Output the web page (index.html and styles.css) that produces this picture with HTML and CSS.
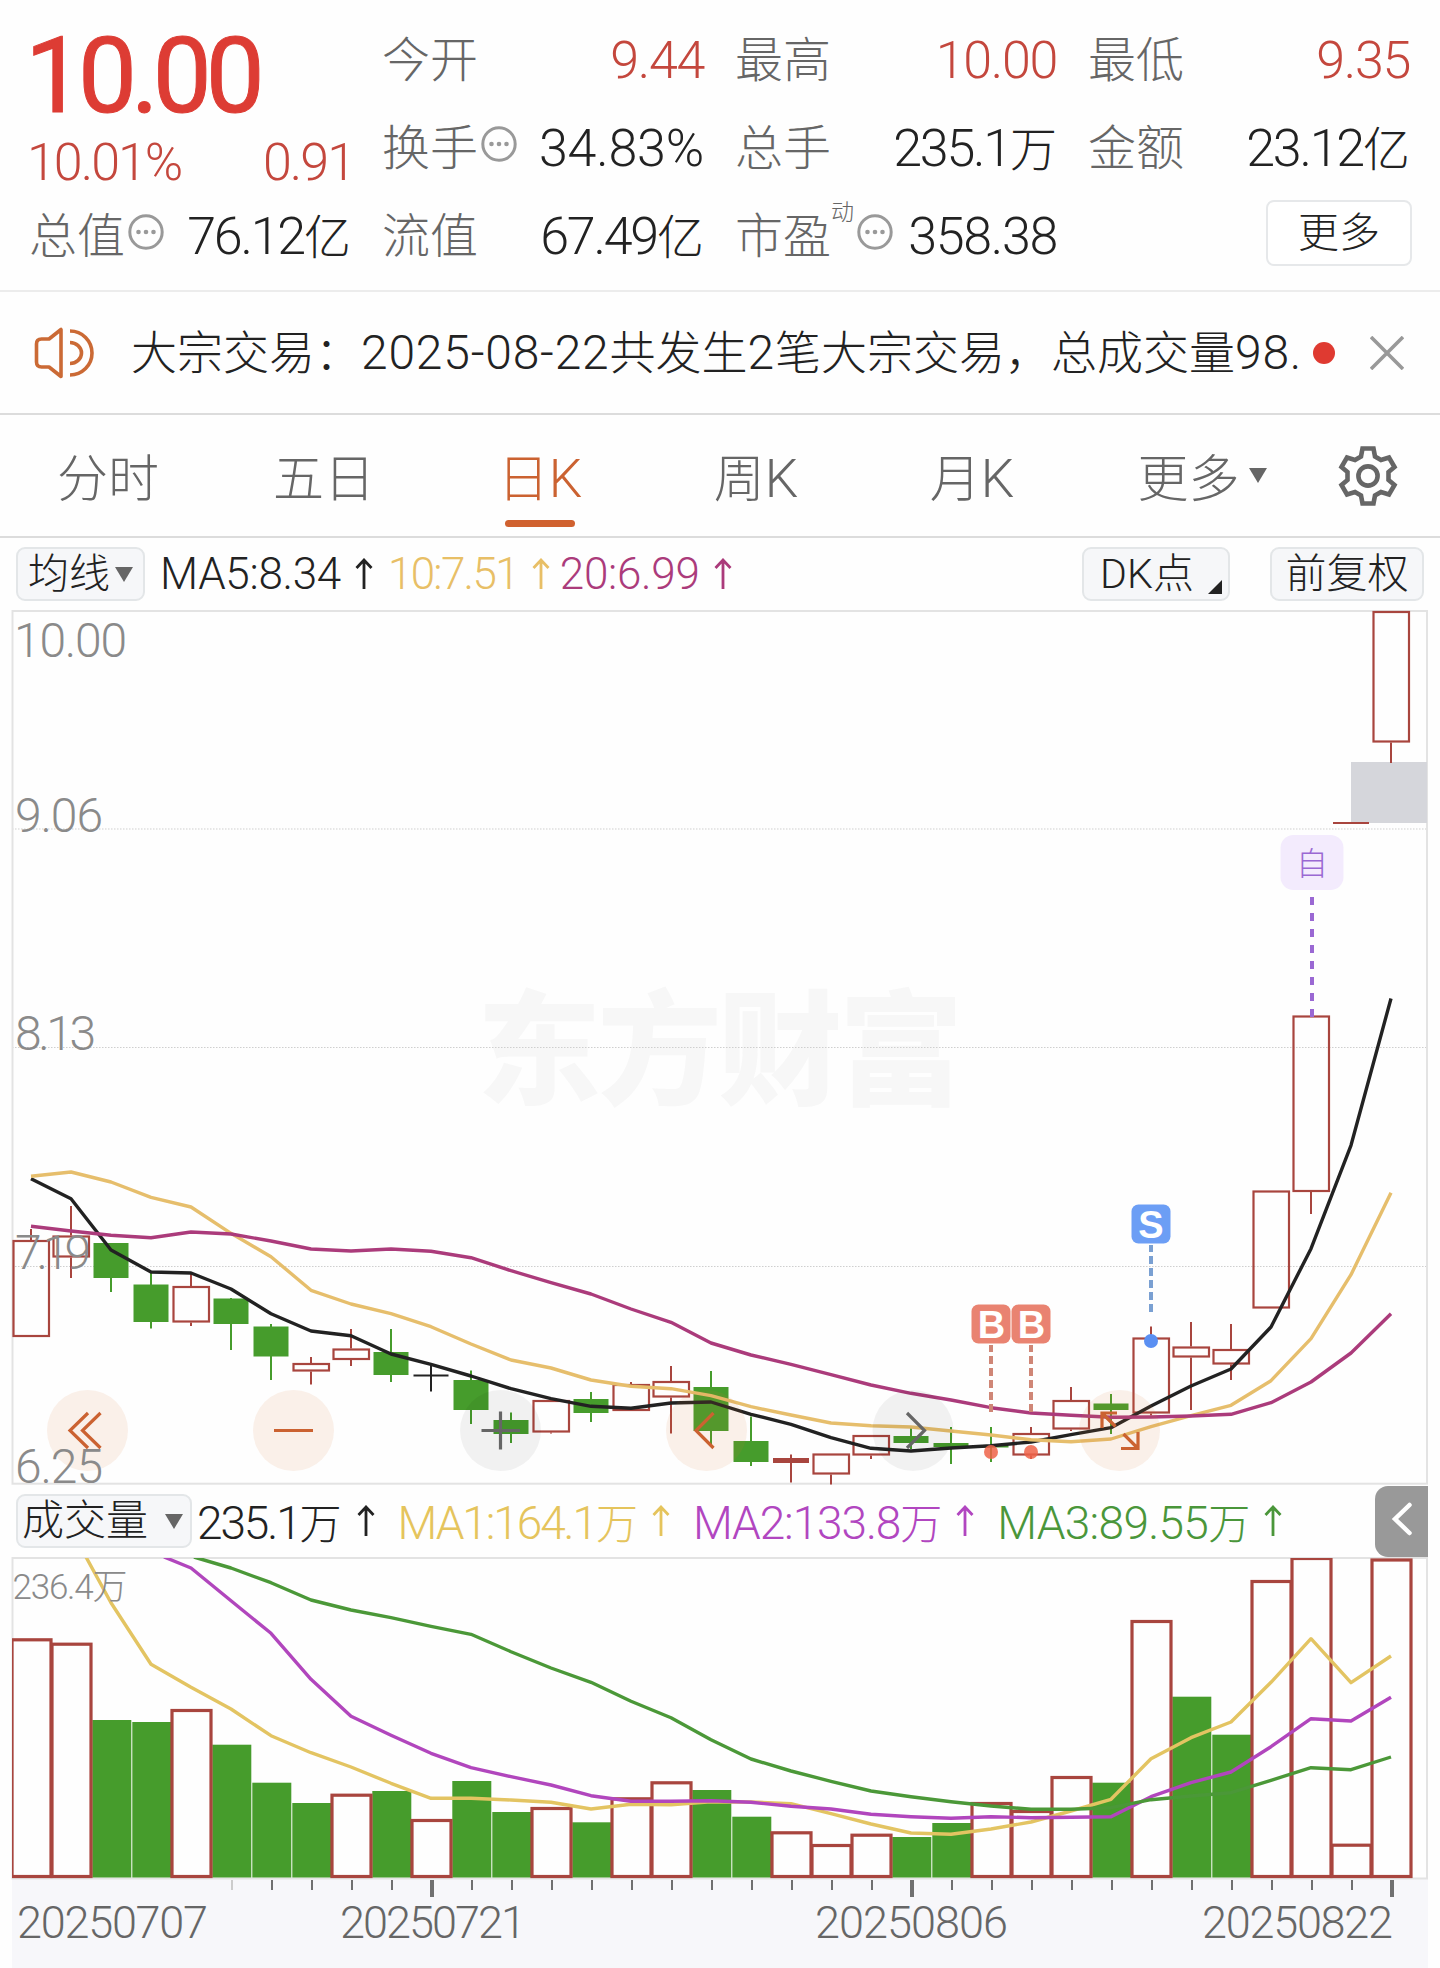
FILE: index.html
```html
<!DOCTYPE html>
<html lang="zh-CN">
<head>
    <meta charset="UTF-8">
    <meta name="viewport" content="width=device-width, initial-scale=1.0">
    <title>日K</title>
    <link rel="stylesheet" href="styles.css">
</head>
<body>

    <div class="quote">
        <div class="price-box">
            <div class="price">10.00</div>
            <div class="change"><span>10.01%</span><span>0.91</span></div>
        </div>
        <div class="cell"><span class="label">今开</span><span class="value red">9.44</span></div>
        <div class="cell"><span class="label">最高</span><span class="value red">10.00</span></div>
        <div class="cell"><span class="label">最低</span><span class="value red">9.35</span></div>

        <div class="cell">
            <span class="label">换手</span>
            <svg class="info" viewBox="0 0 36 36"><use href="#dots"/></svg>
            <span class="value pct">34.83%</span>
        </div>
        <div class="cell"><span class="label">总手</span><span class="value big">235.1<i>万</i></span></div>
        <div class="cell"><span class="label">金额</span><span class="value big">23.12<i>亿</i></span></div>

        <div class="cell">
            <span class="label">总值</span>
            <svg class="info" viewBox="0 0 36 36"><g id="dots"><circle cx="18" cy="18" r="16.2" fill="none" stroke="#999" stroke-width="3"/><circle cx="10.5" cy="18" r="2.3" fill="#999"/><circle cx="18" cy="18" r="2.3" fill="#999"/><circle cx="25.5" cy="18" r="2.3" fill="#999"/></g></svg>
            <span class="value big">76.12<i>亿</i></span>
        </div>
        <div class="cell"><span class="label">流值</span><span class="value big">67.49<i>亿</i></span></div>
        <div class="cell">
            <span class="label">市盈</span><span class="sup">动</span>
            <svg class="info" viewBox="0 0 36 36"><use href="#dots"/></svg>
            <span class="value">358.38</span>
        </div>
        <div class="cell"><button class="more-btn">更多</button></div>
    </div>

    <div class="notice">
        <svg class="speaker" viewBox="0 0 60 52" fill="none" stroke="#cb6a35" stroke-width="3.6" stroke-linejoin="round">
            <path d="M2.500 17q0-5 5-5h7.500L27 2.500v47L15 40H7.500q-5 0-5-5z"/>
            <path d="M36 15.500a11.500 10.500 0 0 1 0 21M36 4a22 22 0 0 1 0 44"/>
        </svg>
        <span class="notice-text">大宗交易：<b>2025-08-22</b>共发生<b>2</b>笔大宗交易，总成交量<b>98.</b></span>
        <span class="red-dot"></span>
        <svg class="close" viewBox="0 0 34 34" stroke="#999" stroke-width="3.6"><path d="M1 1l32 32M33 1L1 33"/></svg>
    </div>

    <div class="tabs">
        <div class="tab">分时</div>
        <div class="tab">五日</div>
        <div class="tab active">日<b>K</b></div>
        <div class="tab">周<b>K</b></div>
        <div class="tab">月<b>K</b></div>
        <div class="tab tab-more">更多<span class="caret"></span></div>
        <svg class="gear" viewBox="-30 -30 60 60" fill="none" stroke="#666" stroke-width="4.600">
            <path d="M-5.500-27.500H5.500L7-19.500L13-16L21-18.500L26.500-9L20.500-4V4L26.500 9L21 18.500L13 16L7 19.500L5.500 27.500H-5.500L-7 19.500L-13 16L-21 18.500L-26.500 9L-20.500 4V-4L-26.500-9L-21-18.500L-13-16L-7-19.500Z"/>
            <circle r="9.600"/>
        </svg>
    </div>

    <div class="ma-bar">
        <button class="chip chip-ma">均线<span class="caret"></span></button>
        <span class="ma black">MA5:8.34</span><svg class="arrow black" viewBox="0 0 18 32"><path id="up" d="M9 31V2M1.500 10L9 2L16.500 10"/></svg>
        <span class="ma yellow">10:7.51</span><svg class="arrow yellow" viewBox="0 0 18 32"><use href="#up"/></svg>
        <span class="ma magenta">20:6.99</span><svg class="arrow magenta" viewBox="0 0 18 32"><use href="#up"/></svg>
        <button class="chip chip-dk"><b>DK</b>点<span class="corner"></span></button>
        <button class="chip chip-fq">前复权</button>
    </div>

    <svg id="kline" class="chart" viewBox="0 609 1440 875" width="1440" height="875"></svg>

    <div class="vol-bar">
        <button class="chip chip-vol">成交量<span class="caret"></span></button>
        <span class="vol black">235.1<i>万</i></span><svg class="arrow black" viewBox="0 0 18 32"><use href="#up"/></svg>
        <span class="vol yellow2">MA1:164.1<i>万</i></span><svg class="arrow yellow2" viewBox="0 0 18 32"><use href="#up"/></svg>
        <span class="vol purple">MA2:133.8<i>万</i></span><svg class="arrow purple" viewBox="0 0 18 32"><use href="#up"/></svg>
        <span class="vol green">MA3:89.55<i>万</i></span><svg class="arrow green" viewBox="0 0 18 32"><use href="#up"/></svg>
        <button class="side-btn"><svg viewBox="0 0 22 34" width="22" height="34"><path d="M18.500 3L4 17L18.500 31" fill="none" stroke="#fff" stroke-width="4.500" stroke-linecap="round"/></svg></button>
    </div>

    <svg id="volume" class="chart" viewBox="0 1556 1440 412" width="1440" height="412"></svg>

    <script>
        // [color, body top, body bottom, high, low]
        const candles = [
            ['r', 1239, 1336, 1228, 1336], ['r', 1234.5, 1256.5, 1205, 1277], ['g', 1242, 1277, 1242, 1291],
            ['g', 1283.5, 1321, 1272, 1327.5], ['r', 1285, 1321.5, 1273, 1325], ['g', 1297.5, 1323, 1297, 1349],
            ['g', 1325.5, 1355.5, 1323, 1379], ['r', 1362, 1370.5, 1356, 1383.5], ['r', 1347.5, 1359, 1328, 1365],
            ['g', 1351, 1374, 1328, 1381], ['k', 1374.5, 1374.5, 1363, 1390.5], ['g', 1379, 1409, 1369.5, 1423],
            ['g', 1419, 1433, 1411.5, 1442], ['r', 1399, 1431.5, 1399, 1432.5], ['g', 1398, 1412, 1391, 1421],
            ['r', 1383, 1410, 1381, 1410], ['r', 1380, 1396.5, 1365, 1432.5], ['g', 1386, 1430, 1370, 1443],
            ['g', 1440, 1461, 1415.5, 1465], ['r', 1457, 1462, 1453.5, 1481.5], ['r', 1452.5, 1473.5, 1452.5, 1483.5],
            ['r', 1434, 1454.5, 1434, 1458], ['g', 1435, 1442, 1426.5, 1448], ['g', 1442, 1446, 1426, 1463],
            ['g', 1445, 1446.5, 1426, 1461], ['r', 1432, 1454.5, 1426, 1458], ['r', 1399, 1428.5, 1386, 1430],
            ['g', 1402.5, 1409, 1393, 1433], ['r', 1336.5, 1412.5, 1325.5, 1414.5], ['r', 1345.5, 1356.5, 1321, 1409],
            ['r', 1348, 1363.5, 1323, 1379], ['r', 1189.5, 1307.5, 1189.5, 1307.5], ['r', 1014.5, 1191, 1014.5, 1213],
            ['r', 821, 823, 821, 823], ['r', 610, 741.5, 610, 762]
        ];
        const ma5 = [1177.7, 1197.7, 1249, 1271, 1272, 1288, 1312.7, 1330, 1334.7, 1353, 1363.3, 1375, 1387.7, 1397.7, 1405.3, 1407.3, 1402, 1401, 1413.3, 1423.3, 1436.7, 1447.3, 1450, 1447, 1444.7, 1441, 1433.7, 1426.7, 1405, 1385, 1368, 1326, 1247.7, 1144.3, 997.5];
        const ma10 = [1175.3, 1171, 1181, 1196.3, 1206, 1232.3, 1255.7, 1289.3, 1303, 1312.7, 1325.7, 1343, 1359, 1367, 1379, 1385.3, 1387.7, 1394.7, 1405.7, 1414, 1422, 1424.7, 1426, 1430, 1434, 1438.7, 1440.7, 1438, 1425.7, 1414.7, 1404.3, 1379.7, 1337.7, 1273.7, 1191.7];
        const ma20 = [1225.3, 1230, 1234.3, 1236.7, 1231, 1233, 1240, 1248, 1250, 1248, 1250.3, 1256.7, 1269.7, 1281.7, 1293, 1308, 1321.3, 1342, 1354, 1363.3, 1373.7, 1384, 1392.3, 1399, 1406.7, 1412, 1414.3, 1416.3, 1416, 1415, 1413.3, 1401.7, 1381, 1352, 1312.7];

        const volTop = [1637.3, 1641.7, 1719, 1721, 1708, 1743.7, 1781.7, 1802, 1792.7, 1790, 1818, 1780, 1811, 1806, 1821.3, 1796.3, 1780.3, 1789, 1815.7, 1830.3, 1843, 1832.7, 1836, 1822, 1801, 1809, 1775, 1781.7, 1619, 1695.7, 1733.7, 1579, 1556, 1842.7, 1557.5];
        // g = green bar, r = hollow red bar
        const volColor = 'rrgg' + 'rgggrgrgg' + 'rgrrgg' + 'rrrgg' + 'rrrg' + 'rggrrrr';
        const vma1 = [1663.3, 1686.3, 1708, 1734.7, 1751.7, 1766, 1782.3, 1797.3, 1797.3, 1799, 1801.3, 1808, 1803.3, 1803.7, 1800.7, 1801, 1802.7, 1812.7, 1823, 1832, 1833.3, 1828, 1821, 1810, 1798.3, 1757.7, 1736.7, 1721, 1681.3, 1637.7, 1681.7, 1655];
        const vma2 = [1567, 1599.7, 1632.3, 1678.3, 1715.3, 1734.3, 1752.3, 1766.7, 1775.7, 1784, 1794.7, 1800.3, 1800.3, 1799.7, 1801.3, 1805.3, 1808, 1813.3, 1815.7, 1817.3, 1815.7, 1816.7, 1816.3, 1815.7, 1795.7, 1781.7, 1771, 1745.7, 1717.7, 1720, 1696.3];
        const vma3 = [1567, 1581.7, 1599, 1609, 1616.7, 1625.3, 1633.3, 1650.7, 1667, 1681.3, 1700.3, 1716.7, 1738.7, 1758, 1770, 1780.3, 1790, 1795.7, 1800.7, 1805, 1808.3, 1808.3, 1806.7, 1798.7, 1795, 1791.7, 1779.3, 1766.7, 1768.7, 1756];

        const RED = '#a8453e';
        const GREEN = '#469c2c';
        const cx = i => 31 + i * 40;

        function rect(x, y, w, h, fill, extra = '') {
            return `<rect x="${x}" y="${y}" width="${w}" height="${h}" fill="${fill}" ${extra}/>`;
        }

        function line(x1, y1, x2, y2, color, w, extra = '') {
            return `<path d="M${x1} ${y1}L${x2} ${y2}" stroke="${color}" stroke-width="${w}" ${extra}/>`;
        }

        function curve(values, start, color, lead = '') {
            const pts = values.map((v, i) => `${cx(i + start)},${v}`).join(' ');
            return `<polyline points="${lead} ${pts}" fill="none" stroke="${color}" stroke-width="3.400" stroke-linejoin="round"/>`;
        }

        function text(x, y, len, str, cls) {
            return `<text x="${x}" y="${y}" textLength="${len}" class="${cls}">${str}</text>`;
        }

        function drawKline() {
            let s = '';
            s += text(477, 1094, 486, '东方财富', 'watermark');
            [828, 1046.5, 1265.5].forEach(y => {
                s += line(12, y, 1427, y, '#cfcfcf', 1, 'stroke-dasharray="1.500 1.500"');
            });
            s += rect(12.5, 610, 1414.5, 872.7, 'none', 'stroke="#e3e3e3" stroke-width="2"');
            s += rect(1351, 761, 76, 61, '#d5d6db');

            candles.forEach(([c, top, bottom, high, low], i) => {
                const x = cx(i);
                if (c === 'k') {
                    s += line(x, high, x, low, '#222', 2) + line(x - 17.5, top, x + 17.5, top, '#222', 2);
                } else if (c === 'g') {
                    s += line(x, high, x, low, GREEN, 2) + rect(x - 17.5, top, 35, bottom - top, GREEN);
                } else {
                    if (high < top) s += line(x, high, x, top, RED, 2);
                    if (low > bottom) s += line(x, bottom, x, low, RED, 2);
                    if (bottom - top < 6) s += rect(x - 18, top, 36, bottom - top, RED);
                    else s += rect(x - 17.5, top + 1, 35.5, bottom - top - 2, 'none', `stroke="${RED}" stroke-width="2.200"`);
                }
            });

            s += curve(ma5, 0, '#222') + curve(ma10, 0, '#e6be6c') + curve(ma20, 0, '#ab3b7b');

            // floating buttons
            [[87.5, 1], [293.5, 1], [500.5, 0], [706.5, 1], [913, 0], [1119.5, 1]].forEach(([x, on]) => {
                s += `<circle cx="${x}" cy="1429.500" r="40.500" fill="${on ? '#d97535' : '#000'}" opacity="${on ? 0.1 : 0.05}"/>`;
            });
            s += '<g fill="none" stroke="#cb6231" stroke-width="3.200">'
                + '<path d="M88 1412L70 1429.500L88 1447M100.500 1412L82.500 1429.500L100.500 1447"/>'
                + '<path d="M274 1429.500H313"/>'
                + '<path d="M713.500 1412L696 1429.500L713.500 1447"/>'
                + '<path d="M1117 1412H1102V1427M1102 1412L1115.500 1425.500M1121 1447.500H1138V1431M1138 1447.500L1123.500 1433"/>'
                + '</g><g fill="none" stroke="#666" stroke-width="3.200">'
                + '<path d="M481.500 1429.500H520M500.500 1410.500V1448.500"/>'
                + '<path d="M907 1412L924.500 1429.500L907 1447"/></g>';

            // buy / sell marks
            [991, 1031].forEach(x => {
                s += line(x, 1344, x, 1411, '#cf8676', 4, 'stroke-dasharray="8 4" stroke-dashoffset="1"');
                s += `<circle cx="${x}" cy="1451" r="7" fill="#ee6348" opacity="0.85"/>`;
                s += rect(x - 19.5, 1303.5, 39, 39, '#e98371', 'rx="7"');
                s += `<text x="${x + 0.5}" y="1337" class="mark">B</text>`;
            });
            s += line(1151, 1244, 1151, 1311, '#7aa0d2', 4, 'stroke-dasharray="8 4" stroke-dashoffset="1"');
            s += '<circle cx="1151" cy="1340" r="7" fill="#5a8ff2"/>';
            s += rect(1131.5, 1203.5, 39, 39, '#6c9ef5', 'rx="7"');
            s += '<text x="1151" y="1237" class="mark">S</text>';

            s += rect(1280.5, 834, 63, 55, '#f3ebfd', 'rx="13"');
            s += '<text x="1312" y="873.500" class="self">自</text>';
            s += line(1312, 896, 1312, 1016, '#9a68d3', 4, 'stroke-dasharray="8 8"');

            s += text(14, 656, 113, '10.00', 'axis');
            s += text(15, 830.5, 88, '9.06', 'axis');
            s += text(15, 1048.5, 81, '8.13', 'axis');
            s += text(15, 1267.5, 76, '7.19', 'axis');
            s += text(15, 1481.5, 88, '6.25', 'axis');
            document.getElementById('kline').innerHTML = s;
        }

        function drawVolume() {
            let s = '<clipPath id="box"><rect x="12" y="1557" width="1416" height="321"/></clipPath>';
            s += rect(12, 1878, 1416, 90, '#f7f7fa');
            s += rect(12.5, 1557, 1414.5, 320.5, 'none', 'stroke="#e3e3e3" stroke-width="2"');
            s += '<g clip-path="url(#box)">';
            volTop.forEach((top, i) => {
                if (volColor[i] === 'g') s += rect(cx(i) - 18.7, top, 39, 1876.5 - top, GREEN);
            });
            volTop.forEach((top, i) => {
                if (volColor[i] === 'r') s += rect(cx(i) - 19, top + 1.5, 39, 1875 - top - 1, 'none', `stroke="${RED}" stroke-width="3.200"`);
            });
            s += curve(vma1, 3, '#e3c462', '86,1556 111,1601.7');
            s += curve(vma2, 4, '#b146bd', '164,1556');
            s += curve(vma3, 5, '#4b9838', '194,1556');
            s += '</g>';

            for (let i = 5; i < 35; i++) {
                const big = i === 10 || i === 22 || i === 34;
                s += rect(cx(i) + (big ? -1 : 0), 1879, big ? 4 : 2, big ? 17 : 10, i === 5 ? '#ccc' : '#707070');
            }
            s += text(12.5, 1598, 115, '236.4万', 'axis small');
            s += text(17, 1936.5, 191, '20250707', 'date');
            s += text(340, 1936.5, 186, '20250721', 'date');
            s += text(815, 1936.5, 193, '20250806', 'date');
            s += text(1202, 1936.5, 191, '20250822', 'date');
            document.getElementById('volume').innerHTML = s;
        }

        drawKline();
        drawVolume();
    </script>
</body>
</html>
```
FILE: styles.css
```css
* {
    box-sizing: border-box;
}

body {
    margin: 0;
    padding: 0;
    width: 1440px;
    overflow: hidden;
    background: #fefefe;
    color: #222;
    font-family: Roboto, "Noto Sans CJK SC", sans-serif;
    font-weight: 300;
}

button {
    font: inherit;
    color: inherit;
    padding: 0;
}

b, i {
    font-weight: inherit;
    font-style: normal;
}

/* quote header */
.quote {
    display: grid;
    grid-template-columns: repeat(4, 321px);
    grid-template-rows: repeat(3, 88px);
    column-gap: 32px;
    padding: 15px 30px 0;
    height: 292px;
    border-bottom: 2px solid #ececec;
}

.price-box {
    grid-row: span 2;
    display: flex;
    flex-direction: column;
    color: #dd3c34;
}

.price {
    margin-left: -5px;
    font-size: 105px;
    font-weight: 400;
    line-height: 124px;
    letter-spacing: -6px;
    -webkit-text-stroke: 1px #dd3c34;
}

.change {
    display: flex;
    justify-content: space-between;
    margin: 0 -3px 0 -3px;
    font-size: 52px;
    line-height: 48px;
    letter-spacing: -2px;
    color: #c4473d;
}

.cell {
    display: flex;
    align-items: center;
    line-height: 60px;
}

.label {
    margin-left: -1px;
    padding-top: 4px;
    font-size: 48px;
    color: #666;
}

.sup {
    font-size: 23px;
    line-height: 24px;
    color: #666;
    align-self: flex-start;
    margin-top: 10px;
}

.info {
    width: 36px;
    height: 36px;
    margin-left: 3px;
    margin-bottom: 7px;
}

.value {
    margin-left: auto;
    padding-top: 4px;
    font-size: 52px;
    letter-spacing: -1.3px;
}

.value.pct {
    letter-spacing: -0.2px;
}

.value.big {
    letter-spacing: -2.2px;
}

.value i {
    font-size: 47px;
    letter-spacing: 0;
}

.red {
    color: #c4473d;
}

.more-btn {
    width: 146px;
    height: 66px;
    margin-left: auto;
    margin-right: -2px;
    margin-bottom: 4px;
    font-size: 41px;
    line-height: 62px;
    background: #fff;
    border: 2px solid #e6e8ea;
    border-radius: 8px;
}

/* notice */
.notice {
    display: flex;
    align-items: center;
    height: 123px;
    padding: 0 36px 0 34px;
    border-bottom: 2px solid #dcdcdc;
}

.speaker {
    width: 60px;
    height: 52px;
}

.notice-text {
    margin-left: 37px;
    width: 1170px;
    font-size: 46px;
    line-height: 60px;
    white-space: nowrap;
}

.notice-text b {
    font-size: 48px;
    letter-spacing: 0.8px;
}

.red-dot {
    width: 22px;
    height: 22px;
    margin-left: 12px;
    border-radius: 50%;
    background: #df3a31;
}

.close {
    width: 34px;
    height: 34px;
    margin-left: auto;
}

/* period tabs */
.tabs {
    display: flex;
    align-items: center;
    height: 123px;
    border-bottom: 2px solid #dcdcdc;
    font-size: 51px;
    color: #666;
}

.tab {
    position: relative;
    width: 216px;
    padding-top: 8px;
    line-height: 112px;
    text-align: center;
}

.tab b {
    font-size: 53px;
}

.tab.active {
    color: #cb6231;
}

.tab.active::after {
    content: "";
    position: absolute;
    left: 73px;
    bottom: 9px;
    width: 70px;
    height: 7px;
    border-radius: 4px;
    background: #d0612f;
}

.tab-more {
    width: 244px;
    display: flex;
    justify-content: center;
    align-items: center;
}

.caret {
    display: inline-block;
    border: 9px solid transparent;
    border-top: 15px solid #666;
    border-bottom: 0;
}

.tab-more .caret {
    margin-left: 9px;
    margin-bottom: 9px;
}

.gear {
    width: 60px;
    height: 60px;
    margin-left: 14px;
}

/* indicator rows */
.ma-bar, .vol-bar {
    display: flex;
    align-items: center;
    height: 72px;
    padding: 0 16px;
    white-space: nowrap;
}

.vol-bar {
    padding-right: 12px;
}

.chip {
    display: flex;
    align-items: center;
    justify-content: center;
    height: 54px;
    font-size: 41px;
    line-height: 48px;
    background: #f6f7f9;
    border: 2px solid #e3e6e8;
    border-radius: 9px;
}

.chip-ma {
    width: 129px;
    gap: 5px;
}

.chip-dk {
    position: relative;
    width: 148px;
    margin-left: auto;
    padding-right: 18px;
}

.chip-fq {
    width: 154px;
    margin-left: 40px;
}

.chip-vol {
    width: 176px;
    gap: 17px;
    padding-right: 3px;
    font-size: 42px;
}

.corner {
    position: absolute;
    right: 6px;
    bottom: 5px;
    border-left: 14px solid transparent;
    border-bottom: 14px solid #222;
}

.ma {
    font-size: 44px;
    letter-spacing: -0.3px;
    margin-left: 15px;
}

.ma.yellow {
    letter-spacing: -1.7px;
}

.ma.magenta {
    margin-left: 10px;
}

.vol {
    font-size: 46px;
    letter-spacing: -2.1px;
    margin-left: 23px;
    margin-top: -2px;
}

.vol.purple {
    letter-spacing: -1.1px;
}

.vol.green {
    letter-spacing: -0.7px;
}

.vol i {
    font-size: 42px;
    letter-spacing: 0;
}

.chip-vol + .vol {
    margin-left: 5px;
    margin-right: 1px;
}

.arrow {
    width: 18px;
    height: 32px;
    margin-left: 14px;
    fill: none;
    stroke: currentColor;
    stroke-width: 2.8;
}

.black { color: #222; }
.yellow { color: #e8bf66; }
.magenta { color: #ab3b7b; }
.yellow2 { color: #e5c45c; }
.purple { color: #b146c0; }
.green { color: #4a963a; }

.side-btn {
    width: 53px;
    height: 71px;
    margin-left: auto;
    border: 0;
    border-radius: 13px 0 0 13px;
    background: #999;
}

/* charts */
.chart {
    display: block;
    overflow: visible;
}

.axis {
    font-size: 48px;
    fill: #8a8a8a;
}

.axis.small {
    font-size: 35px;
}

.date {
    font-size: 45px;
    fill: #666;
}

.mark {
    font-family: "Liberation Sans", sans-serif;
    font-weight: bold;
    font-size: 38px;
    text-anchor: middle;
    fill: #fff;
}

.self {
    font-size: 32px;
    font-weight: 300;
    text-anchor: middle;
    fill: #9a68d3;
}

.watermark {
    font-size: 124px;
    font-weight: 900;
    fill: #f7f7f7;
}
```
